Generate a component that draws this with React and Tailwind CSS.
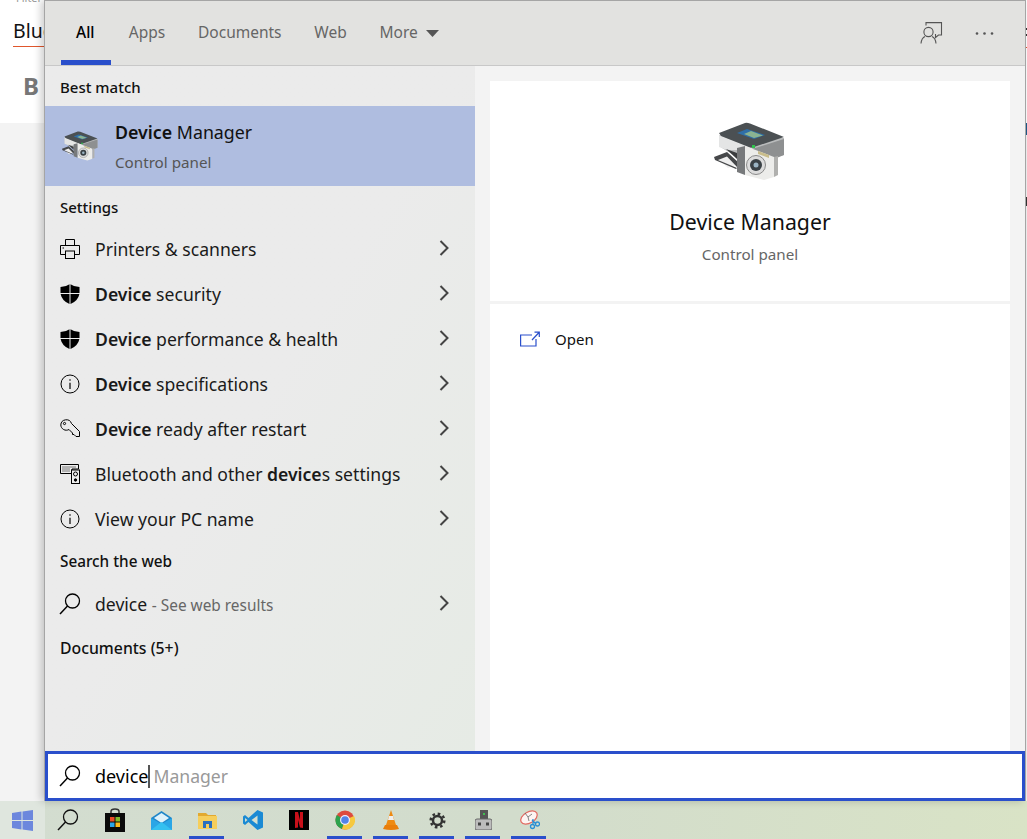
import React from "react";

const FONT = "font-['Noto_Sans','Open_Sans',sans-serif]";

function Search({ className = "", size = 24 }) {
  return (
    <svg width={size} height={size} viewBox="0 0 24 24" fill="none" stroke="currentColor" strokeWidth="1.3" className={className}>
      <circle cx="14.5" cy="9" r="7" />
      <path d="M9.5 14 L2 22" strokeWidth="1.5" />
    </svg>
  );
}

function DeviceIcon({ size = 73 }) {
  return (
    <svg width={size} height={(size * 60) / 73} viewBox="0 0 73 60" className="blur-[0.3px]">
      <path d="M3 36 L13 32 L24 42 L14 46Z" fill="#eeeeee" />
      <path d="M0 35 L13 30 L25 41 L23 45 L13 34.5 L4 38 L23 46 L22 47 L1 38Z" fill="#46484a" />
      <path d="M5 13 L5 24 L13 29 L23 34 L60 36 L70 33 L70 16Z" fill="#b9bbbc" />
      <path d="M5 13 L5 25 L13 28 L24 28 L38 27 L38 25Z" fill="#e4e5e5" />
      <path d="M12 27 L23 31 L23 37Z" fill="#3b3d3f" />
      <path d="M38 27 L70 17 L70 33 L60 37 L38 30Z" fill="#8e9091" />
      <path d="M5 11 L31 1 Q33 .5 36 1.5 L70 15 L40 25 Q38 26 36 25.5 L7 14Z" fill="#4b5053" />
      <path d="M23 11 L33 7 L51 13 L40 17Z" fill="#2f6fa8" />
      <path d="M30 12 L37 9 L49 13.5 L40 16Z" fill="#8ab392" />
      <rect x="38" y="23" width="3" height="3" fill="#2fc24c" />
      <path d="M23 26 L31 24 L31 53 L23 50Z" fill="#77797b" />
      <path d="M31 24 L60 35 L60 55 L50 58 L31 53Z" fill="#ececea" />
      <path d="M44 29 L55 33 L55 36 L44 32Z" fill="#c9bd8c" />
      <path d="M60 35 L64 34 L64 53 L60 55Z" fill="#b0b0ae" />
      <circle cx="42" cy="43" r="9.5" fill="#dcdcdc" stroke="#8a8a8a" />
      <circle cx="42" cy="43" r="6" fill="#3a4146" />
      <circle cx="42" cy="43" r="2.5" fill="#9bb4c4" />
    </svg>
  );
}

function Shield() {
  return (
    <svg width="20" height="20" viewBox="0 0 20 20" fill="#000">
      <path d="M.5 3 Q6 3 9.5 .3 V9 H.5Z" />
      <path d="M10.5 .3 Q14 3 19.5 3 V9 H10.5Z" />
      <path d="M.6 10 H9.5 V20 Q2 17 .6 10Z" />
      <path d="M10.5 10 H19.4 Q18 17 10.5 20Z" />
    </svg>
  );
}

function Info() {
  return (
    <svg width="20" height="20" viewBox="0 0 20 20" fill="none" stroke="#000" strokeWidth="1">
      <circle cx="10" cy="10" r="9" />
      <path d="M10 8.8 V15" strokeWidth="1.2" />
      <circle cx="10" cy="6" r=".8" fill="#000" stroke="none" />
    </svg>
  );
}

function Printer() {
  return (
    <svg width="20" height="20" viewBox="0 0 20 20" fill="none" stroke="#000" strokeWidth="1">
      <path d="M5.5 6.5 V.5 H14.5 V6.5" />
      <path d="M5 15.5 H.5 V6.5 H19.5 V15.5 H15" />
      <rect x="5.5" y="12" width="9" height="7.5" />
      <path d="M2.5 9 H4" />
    </svg>
  );
}

function KeyIcon() {
  return (
    <svg width="21" height="21" viewBox="0 0 21 21" fill="none" stroke="#000" strokeWidth="1">
      <path d="M.8 7 A5.5 5.5 0 0 1 11.5 5.5 L19.5 13.5 V18.5 H16 L14 16.5 H12.5 V15 L9 11.5 A5.5 5.5 0 0 1 .8 7Z" />
      <circle cx="4.5" cy="5.5" r="1.1" />
    </svg>
  );
}

function Bluetooth() {
  return (
    <svg width="20" height="20" viewBox="0 0 20 20" fill="none" stroke="#000" strokeWidth="1">
      <path d="M.5 .5 H18.5 V5 H12 V9.5 H.5Z" fill="#eee" />
      <path d="M2.5 3 H16 M2.5 5 H10 M2.5 7 H10" strokeDasharray="1 1" />
      <rect x="11.5" y="6" width="8" height="13.5" fill="#eee" />
      <circle cx="15.5" cy="10" r="2" />
      <circle cx="15.5" cy="16" r="1.2" fill="#000" />
    </svg>
  );
}

function Chevron() {
  return (
    <svg width="10" height="16" viewBox="0 0 10 16" fill="none" stroke="#444" strokeWidth="2" className="mr-[26px] -mt-[1px] shrink-0">
      <path d="M1.5 1 L8.5 8 L1.5 15" />
    </svg>
  );
}

function Row({ icon, children }) {
  return (
    <div className="h-[45px] flex items-center">
      <div className="w-[50px] flex justify-center shrink-0">{icon}</div>
      <div className="flex-1 text-[17.6px] text-[#1a1a1a] pt-[2px]">{children}</div>
      <Chevron />
    </div>
  );
}

function B({ children }) {
  return <span className="font-semibold">{children}</span>;
}

function Heading({ children, className = "" }) {
  return <div className={`pl-[15px] font-medium text-[#111] ${className}`}>{children}</div>;
}

function Tab({ children, active, className = "" }) {
  return (
    <div className={`h-full flex items-center relative text-[15.5px] ${active ? "font-medium text-black" : "text-[#666]"} ${className}`}>
      {children}
      {active && <div className="absolute left-[-15px] right-[-15px] bottom-0 h-[5px] bg-[#2a4fcb]" />}
    </div>
  );
}

function TaskIcon({ children, active }) {
  return (
    <div className="w-[46px] h-full flex items-center justify-center relative">
      {children}
      {active && <div className="absolute bottom-0 left-[5px] w-[35px] h-[3px] bg-[#2a4fcb]" />}
    </div>
  );
}

export default function App() {
  return (
    <div className={`w-[1027px] h-[839px] relative overflow-hidden bg-[#f3f3f3] flex flex-col ${FONT}`}>
      <div className="h-[123px] bg-white pl-[13px] text-[#111] shrink-0">
        <div className="pl-[3px] -mt-[9px] h-[19px] text-[11px] leading-[14px] text-[#999]">Filter</div>
        <div className="text-[19.5px] w-[31px] border-b border-[#e0562c] h-[37px] leading-[26px] pt-[8px]">Blue</div>
        <div className="mt-[23px] ml-[10px] text-[24px] font-bold text-[#777] leading-[32px]">B</div>
      </div>
      <div className="flex-1" />

      <div className="h-[38px] flex items-center bg-gradient-to-r from-[#d3ddd0] via-[#d2dccc] to-[#d9e3c6] shrink-0">
        <div className="w-[45px] h-full bg-[#dfe6de] flex items-center justify-center shrink-0">
          <svg width="21" height="21" viewBox="0 0 21 21" fill="#6c87dd">
            <path d="M0 3 L9.5 1.6 V10 H0Z" />
            <path d="M10.5 1.4 L21 0 V10 H10.5Z" />
            <path d="M0 11 H9.5 V19.4 L0 18Z" />
            <path d="M10.5 11 H21 V21 L10.5 19.6Z" />
          </svg>
        </div>
        <div className="w-[46px] flex justify-center text-[#111] mr-[1px]"><Search size={24} /></div>
        <TaskIcon>
          <svg width="20" height="24" viewBox="0 0 20 24">
            <path d="M6 8 V3.5 Q6 1 10 1 Q14 1 14 3.5 V8" fill="none" stroke="#333" strokeWidth="1.5" />
            <rect y="5" width="20" height="19" fill="#0a0a0a" />
            <rect x="5" y="9" width="4.5" height="4.5" fill="#ea4b25" />
            <rect x="10.5" y="9" width="4.5" height="4.5" fill="#7fba2b" />
            <rect x="5" y="14.5" width="4.5" height="4.5" fill="#2aa5e8" />
            <rect x="10.5" y="14.5" width="4.5" height="4.5" fill="#fcb918" />
          </svg>
        </TaskIcon>
        <TaskIcon>
          <svg width="21" height="19" viewBox="0 0 21 19">
            <path d="M0 7 L10.5 0 L21 7 V19 H0Z" fill="#1f86c9" />
            <path d="M3 7 L10.5 2 L18 7 L10.5 12Z" fill="#dff2fb" />
            <path d="M0 7 L10.5 13 L21 7 V19 H0Z" fill="#2aa6e6" />
            <path d="M0 19 L10.5 11 L21 19Z" fill="#34c0f0" />
          </svg>
        </TaskIcon>
        <TaskIcon active>
          <svg width="19" height="17" viewBox="0 0 19 17">
            <path d="M0 1 H8 L10 3 H18 V5 H0Z" fill="#e2a92f" />
            <rect y="4" width="19" height="13" fill="#f6ce5b" />
            <path d="M5 9 H14 V16 H11 V12 H8 V16 H5Z" fill="#2a6fbf" />
          </svg>
        </TaskIcon>
        <TaskIcon>
          <svg width="20" height="20" viewBox="0 0 20 20">
            <path d="M14.5 0 L20 2.5 V17.5 L14.5 20 L5.5 12 L2 15 L0 13.5 V6.5 L2 5 L5.5 8Z" fill="#1a8ad4" />
            <path d="M14.5 5.5 L8.5 10 L14.5 14.5Z" fill="#d5dfd0" />
            <path d="M2 8 L4.5 10 L2 12Z" fill="#d5dfd0" />
          </svg>
        </TaskIcon>
        <TaskIcon>
          <svg width="20" height="20" viewBox="0 0 20 20">
            <rect width="20" height="20" fill="#000" />
            <path d="M6 2 H9 L11 10 V2 H14 V18 L11 17.5 L9 10 V17.5 L6 18Z" fill="#c8101a" />
          </svg>
        </TaskIcon>
        <TaskIcon active>
          <svg width="20" height="20" viewBox="0 0 20 20">
            <circle cx="10" cy="10" r="9.5" fill="#dd4b3e" />
            <path d="M10 10 L1.8 5 A9.5 9.5 0 0 0 7 19 Z" fill="#2da24d" />
            <path d="M10 10 L19 6 A9.5 9.5 0 0 1 7 19 Z" fill="#f6c93f" />
            <circle cx="10" cy="10" r="5" fill="#eef" />
            <circle cx="10" cy="10" r="3.8" fill="#5283e8" />
          </svg>
        </TaskIcon>
        <TaskIcon active>
          <svg width="16" height="20" viewBox="0 0 16 20">
            <path d="M8 0 L13 15 H3Z" fill="#ee8a12" />
            <path d="M6 6 H10 L11 10 H5Z" fill="#eee" />
            <path d="M2 15 H14 L16 19 Q8 21 0 19Z" fill="#e97e0b" />
          </svg>
        </TaskIcon>
        <TaskIcon active>
          <svg width="17" height="17" viewBox="0 0 17 17" fill="none" stroke="#333">
            <circle cx="8.5" cy="8.5" r="4.5" strokeWidth="2.5" />
            <circle cx="8.5" cy="8.5" r="6.8" strokeWidth="2.5" strokeDasharray="2.6 2.74" />
          </svg>
        </TaskIcon>
        <TaskIcon active>
          <svg width="17" height="20" viewBox="0 0 17 20">
            <rect x="5" width="8" height="10" fill="#555" />
            <rect x="8" y="3" width="2" height="2" fill="#3fbf4f" />
            <rect y="9" width="17" height="11" rx="2" fill="#bcbcbc" stroke="#666" />
            <rect x="3" y="12.5" width="3" height="3" fill="#444" />
            <rect x="11" y="12.5" width="3" height="3" fill="#444" />
          </svg>
        </TaskIcon>
        <TaskIcon active>
          <svg width="21" height="20" viewBox="0 0 21 20" fill="none">
            <ellipse cx="10" cy="7.5" rx="9" ry="5.5" transform="rotate(-30 10 7.5)" fill="#fdf4f2" stroke="#e26a62" strokeWidth="1.3" />
            <path d="M9 7 L6 3 M9 7 L13 4 M9 7 L10 11" stroke="#666" strokeWidth=".8" />
            <circle cx="13.5" cy="16.5" r="2" stroke="#2a8fd4" strokeWidth="1.3" />
            <circle cx="18.5" cy="14" r="2" stroke="#2a8fd4" strokeWidth="1.3" />
            <path d="M14 15 L14 9 M17 14 L13 10" stroke="#2a8fd4" strokeWidth="1.2" />
          </svg>
        </TaskIcon>
      </div>

      {/* bits of the page behind, showing past the flyout's right edge */}
      <div className="absolute right-0 top-[47px] w-[2px] h-[1px] bg-[#e0562c]" />
      <div className="absolute right-0 top-[28px] w-[2px] h-[2px] bg-[#333]" />
      <div className="absolute right-0 top-[34px] w-[2px] h-[2px] bg-[#333]" />
      <div className="absolute right-0 top-[123px] w-[2px] h-[12px] bg-[#1f5a8a]" />
      <div className="absolute right-0 top-[197px] w-[2px] h-[9px] bg-[#333]" />

      {/* Search flyout window */}
      <div className="absolute left-[44px] top-0 w-[982px] h-[801px] flex flex-col border-l border-r border-t border-[#a5a5a5] shadow-[-3px_0_8px_rgba(0,0,0,0.2)] bg-[#f3f3f3]">
        <div className="h-[65px] bg-[#e2e2e0] border-b border-[#c8c8c8] flex items-center shrink-0 pl-[31px]">
          <div className="flex items-center h-full gap-[32.8px]">
            <Tab active className="w-[20px]">All</Tab>
            <Tab>Apps</Tab>
            <Tab>Documents</Tab>
            <Tab>Web</Tab>
            <Tab>
              More
              <svg width="13" height="7" viewBox="0 0 13 7" className="ml-[8px]" fill="#555"><path d="M0 0 H13 L6.5 7Z" /></svg>
            </Tab>
          </div>
          <div className="ml-auto flex items-center gap-[32px] mr-[31px]">
            <svg width="23" height="22" viewBox="0 0 23 22" fill="none" stroke="#555" strokeWidth="1.1">
              <path d="M6 3.5 V.6 H21.5 V13 H18.5 L15.5 15.5 V12" />
              <circle cx="8.5" cy="10" r="4.6" />
              <path d="M1 21.5 Q1.5 16 5 14.5 M12 14.5 Q15.5 16 16 21.5" />
            </svg>
            <svg width="19" height="3" viewBox="0 0 19 3" fill="#555">
              <circle cx="2" cy="1.5" r="1.3" /><circle cx="9.5" cy="1.5" r="1.3" /><circle cx="17" cy="1.5" r="1.3" />
            </svg>
          </div>
        </div>

        <div className="flex-1 flex min-h-0">
          <div className="w-[430px] h-full bg-gradient-to-br from-[#ebebeb] via-[#ebebeb] to-[#e6ebe5] shrink-0">
            <Heading className="pt-[10px] h-[40px] text-[15px]">Best match</Heading>
            <div className="h-[80px] bg-[#afbde0] flex items-center">
              <div className="w-[70px] flex justify-center shrink-0"><DeviceIcon size={37} /></div>
              <div className="flex flex-col">
                <div className="text-[17.8px] leading-[25px] text-[#111] mb-[7px] -mt-[1px]"><B>Device</B> Manager</div>
                <div className="text-[15.2px] text-[#555] leading-[20px]">Control panel</div>
              </div>
            </div>
            <Heading className="pt-[10px] h-[40px] text-[15px]">Settings</Heading>
            <Row icon={<Printer />}>Printers &amp; scanners</Row>
            <Row icon={<Shield />}><B>Device</B> security</Row>
            <Row icon={<Shield />}><B>Device</B> performance &amp; health</Row>
            <Row icon={<Info />}><B>Device</B> specifications</Row>
            <Row icon={<KeyIcon />}><B>Device</B> ready after restart</Row>
            <Row icon={<Bluetooth />}>Bluetooth and other <B>device</B>s settings</Row>
            <Row icon={<Info />}>View your PC name</Row>
            <Heading className="pt-[9px] h-[40px] text-[15.3px]">Search the web</Heading>
            <Row icon={<Search size={24} className="text-black" />}>device <span className="text-[15.4px] text-[#666]"> - See web results</span></Row>
            <Heading className="pt-[11px] h-[40px] text-[15.8px]">Documents (5+)</Heading>
          </div>
          <div className="flex-1 px-[15px] pt-[15px] bg-[#f3f3f3]">
            <div className="bg-white h-full flex flex-col">
              <div className="h-[223px] flex flex-col items-center border-b-[3px] border-[#f3f3f3] shrink-0">
                <div className="mt-[41px] h-[60px]"><DeviceIcon size={73} /></div>
                <div className="mt-[25px] text-[21.3px] text-[#111] leading-[30px]">Device Manager</div>
                <div className="mt-[6px] text-[15.2px] text-[#666] leading-[22px]">Control panel</div>
              </div>
              <div className="flex items-center h-[70px] pl-[30px] text-[15px] text-[#111]">
                <svg width="20" height="16" viewBox="0 0 20 16" fill="none" stroke="#2a4fcb" strokeWidth="1.2" className="mr-[15px]">
                  <path d="M12 4 H.6 V15 H16 V8" />
                  <path d="M12 9 L19 1.5 M14.5 1.2 H19.3 V6" />
                </svg>
                Open
              </div>
            </div>
          </div>
        </div>

        <div className="h-[50px] bg-white border-[3px] border-[#2a4fcb] flex items-center shrink-0 text-[18px]">
          <div className="w-[47px] pl-[10px] text-black"><Search size={24} /></div>
          <span className="text-black">device</span>
          <span className="w-[2px] h-[23px] bg-[#555]" />
          <span className="text-[#999] ml-[3px] text-[17.6px]">Manager</span>
        </div>
      </div>
    </div>
  );
}
